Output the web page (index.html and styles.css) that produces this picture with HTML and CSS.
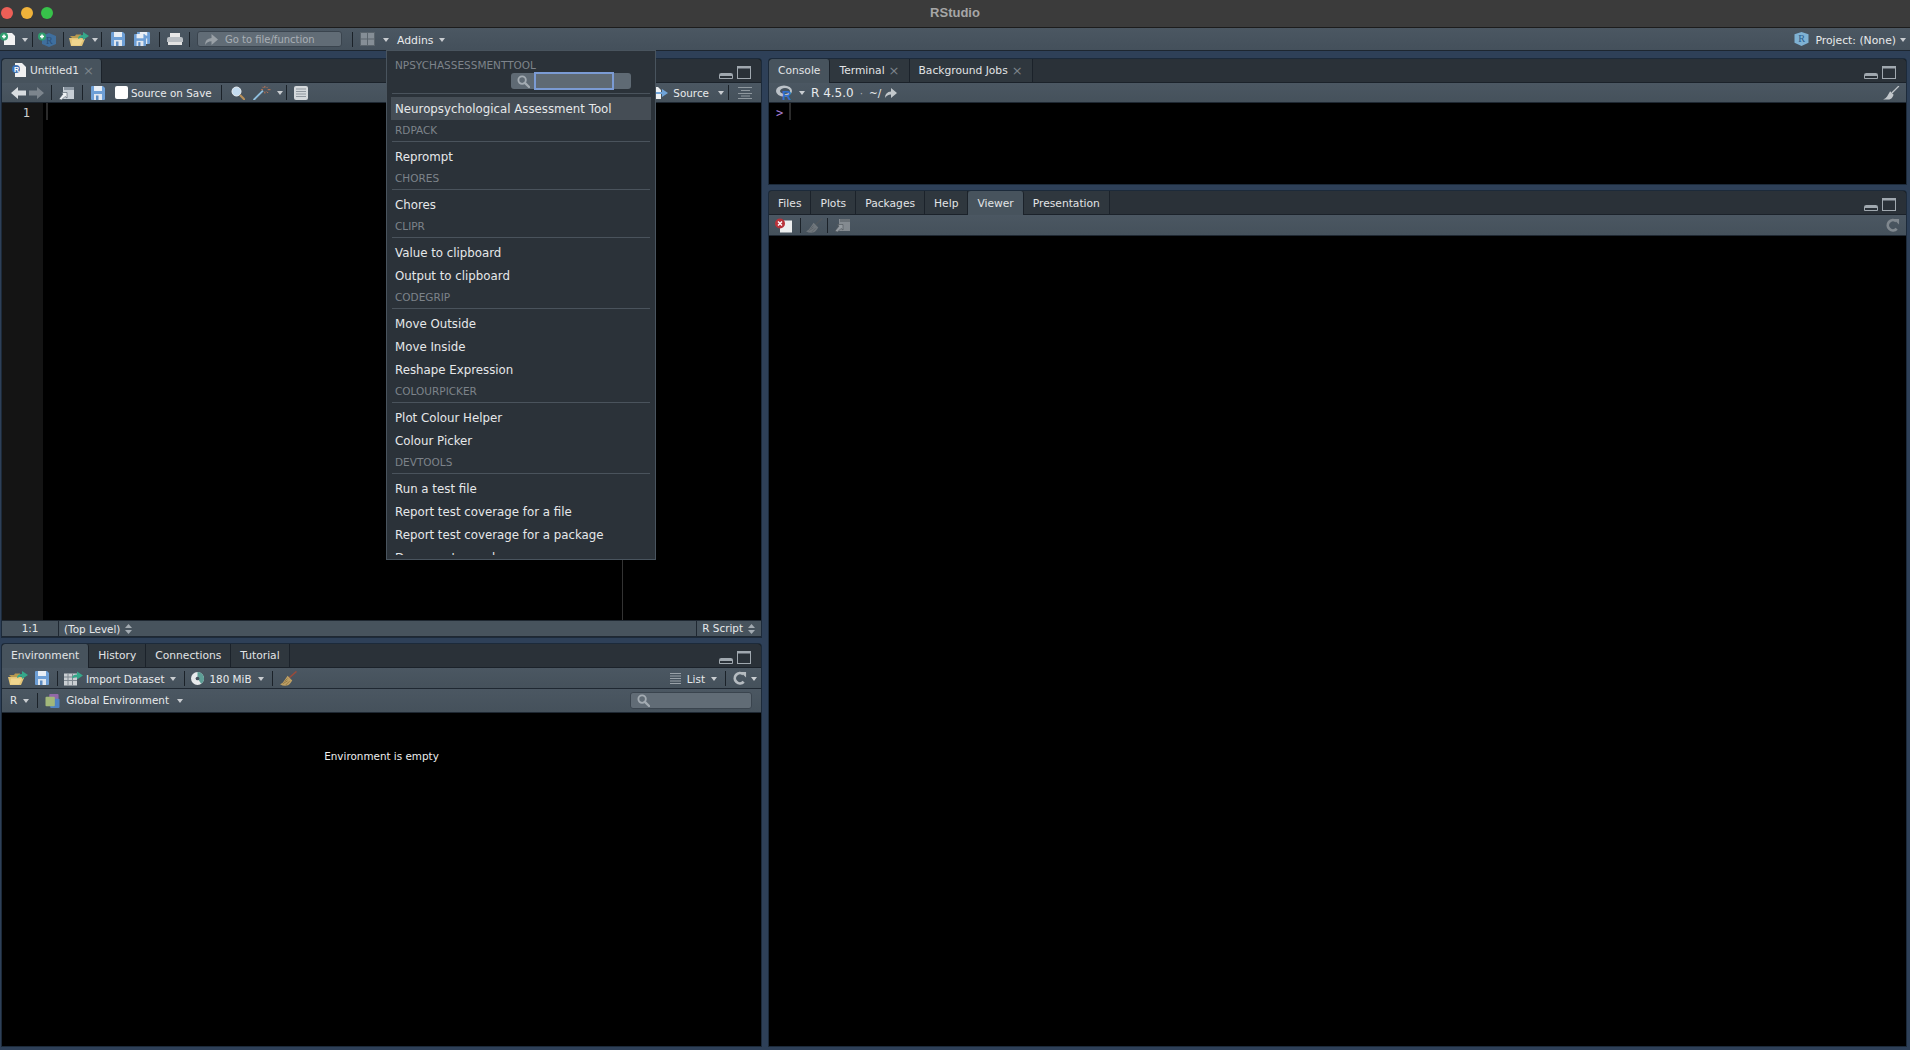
FILE: index.html
```html
<!DOCTYPE html>
<html lang="en">
<head>
    <meta charset="UTF-8">
    <title>RStudio</title>
    <link rel="stylesheet" href="styles.css">
</head>
<body>
    <svg class="sprites" xmlns="http://www.w3.org/2000/svg">
        <symbol id="i-save" viewBox="0 0 14 14">
            <path d="M0 1q0-1 1-1h11l2 2v11q0 1-1 1H1q-1 0-1-1z" fill="#6d9fd6"/>
            <rect x="3" y="0" width="8" height="5" fill="#e8eef5"/>
            <rect x="3" y="8" width="8" height="6" fill="#dfe7f0"/>
            <rect x="5" y="9.500" width="2.500" height="4.500" fill="#5d8cc2"/>
        </symbol>
        <symbol id="i-folder" viewBox="0 0 20 14">
            <path d="M1 4h5l1-1.500h5V6H3z" fill="#b89a50"/>
            <path d="M0 6h13l3 1-3 7H2z" fill="#e3c477"/>
            <path d="M3 7.500h11l-3 6H2z" fill="#f0d68f"/>
            <path d="M9 7q0-4 5-4V0l6 4-6 4V5.500q-3 0-5 1.500z" fill="#35a88a"/>
        </symbol>
        <symbol id="i-popout" viewBox="0 0 15 14">
            <path d="M4 1h11v12H4z" fill="#c7ced5"/>
            <path d="M5 1h10v3H5z" fill="#8b96a1"/>
            <path d="M0 13l4-5-2-1.500h6V12L6 10.500 2.500 14z" fill="#eef1f3" stroke="#47535e" stroke-width=".6"/>
        </symbol>
        <symbol id="i-broom" viewBox="0 0 18 16">
            <path d="M17.500 0.500L10 7" stroke="#9a4a3a" stroke-width="1.600" fill="none"/>
            <path d="M8 5l5 5q-3 5-6 5.500Q3 16 0 14q3-1 4-3 2-3 4-6z" fill="#bd9f63"/>
            <path d="M3 13.500l5-3M6 15l4-4M5 11l3-3" stroke="#7f673a" stroke-width=".7" fill="none"/>
        </symbol>
        <symbol id="i-search" viewBox="0 0 14 14">
            <circle cx="5.500" cy="5.500" r="4" fill="none" stroke="currentColor" stroke-width="2"/>
            <path d="M8.500 8.500L13 13" stroke="currentColor" stroke-width="2.400" stroke-linecap="round"/>
        </symbol>
        <symbol id="i-refresh" viewBox="0 0 15 15">
            <path d="M12 11.500A5.500 5.500 0 1 1 11.500 3.500" fill="none" stroke="currentColor" stroke-width="3"/>
            <path d="M8.500 1h6v6z" fill="currentColor"/>
        </symbol>
        <symbol id="i-updown" viewBox="0 0 7 10">
            <path d="M3.500 0L7 4H0zM0 6h7l-3.500 4z" fill="#a3abb2"/>
        </symbol>
        <symbol id="i-shrink" viewBox="0 0 14 6">
            <path d="M.5 1.500q0-1 1-1h11q1 0 1 1v4H.5z" fill="none" stroke="#a0a8af"/>
            <rect x="1" y="1" width="12" height="2" fill="#a0a8af"/>
        </symbol>
        <symbol id="i-expand" viewBox="0 0 14 13">
            <rect x=".5" y=".5" width="13" height="12" fill="none" stroke="#a0a8af"/>
            <rect x="1" y="1" width="12" height="1.500" fill="#a0a8af"/>
        </symbol>
        <symbol id="i-r-arrow" viewBox="0 0 12 10">
            <path d="M0 10q0-6 6-6.500V0l6 5-6 5V6.500Q2 6.500 0 10z" fill="currentColor"/>
        </symbol>
    </svg>

    <div class="titlebar">
        <div class="lights">
            <span class="light light-red"></span>
            <span class="light light-yellow"></span>
            <span class="light light-green"></span>
        </div>
        <span class="title-text">RStudio</span>
    </div>

    <div class="main-toolbar">
        <svg class="icon w16" viewBox="0 0 16 14">
            <path d="M4 1h8l3 3v9H4z" fill="#f2f2f2"/>
            <circle cx="4" cy="4.500" r="4" fill="#2f9e6e"/>
            <path d="M2 4.500h4M4 2.500v4" stroke="#fff" stroke-width="1.500"/>
        </svg>
        <span class="caret m-l6"></span>
        <span class="sep m-l4"></span>
        <svg class="icon w19 m-l5" viewBox="0 0 19 15">
            <path d="M11 1l7 3v8l-7 3-7-3V4z" fill="#3f6f9e"/>
            <text x="8" y="12" class="svg-r">R</text>
            <circle cx="4" cy="4.500" r="4" fill="#2f9e6e"/>
            <path d="M2 4.500h4M4 2.500v4" stroke="#fff" stroke-width="1.500"/>
        </svg>
        <span class="sep m-l6"></span>
        <svg class="icon w20 m-l5"><use href="#i-folder"/></svg>
        <span class="caret m-l3"></span>
        <span class="sep m-l3"></span>
        <svg class="icon w14 m-l9"><use href="#i-save"/></svg>
        <svg class="icon w16 m-l9" viewBox="0 0 16 14">
            <use href="#i-save" x="3" y="-1" width="13" height="13"/>
            <use href="#i-save" x="0" y="2" width="12" height="12"/>
        </svg>
        <span class="sep m-l9"></span>
        <svg class="icon w16 m-l7" viewBox="0 0 16 14">
            <path d="M3 1h10v5H3z" fill="#e8e8e8"/>
            <path d="M0 7q0-2 2-2h12q2 0 2 2v3H0z" fill="#b9bec3"/>
            <path d="M1 10h14v3H1z" fill="#e3e3e3"/>
        </svg>
        <span class="sep m-l6"></span>
        <div class="goto m-l7">
            <svg class="goto-arrow"><use href="#i-r-arrow"/></svg>
            <span class="goto-text">Go to file/function</span>
        </div>
        <span class="sep m-l10"></span>
        <svg class="icon w15 m-l7" viewBox="0 0 15 14">
            <rect width="15" height="14" fill="#5a646c"/>
            <path d="M1 1h6v5.500H1zM8 1h6v5.500H8zM1 7.500h6V13H1zM8 7.500h6V13H8z" fill="#858e96"/>
        </svg>
        <span class="caret m-l8"></span>
        <span class="main-text m-l8">Addins</span>
        <span class="caret m-l6"></span>
        <span class="spacer"></span>
        <svg class="icon w15" viewBox="0 0 15 15">
            <path d="M7.500 0L15 2.500v9L7.500 15 0 11.500v-9z" fill="#7fb2d4"/>
            <text x="4" y="11" class="svg-r-dark">R</text>
        </svg>
        <span class="main-text m-l6">Project: (None)</span>
        <span class="caret m-l4"></span>
        <span class="main-end"></span>
    </div>

    <div class="workspace">
        <div class="column left-column">
            <section class="pane source-pane">
                <div class="tabstrip">
                    <div class="tab active tab-source">
                        <svg class="icon w14" viewBox="0 0 14 14">
                            <path d="M3 0h7l4 4v10H3z" fill="#f1f1f1"/>
                            <circle cx="4" cy="6" r="4" fill="#3c6fb4"/>
                            <text x="2" y="9" class="svg-r-small">R</text>
                        </svg>
                        <span>Untitled1</span>
                        <span class="tab-x">×</span>
                    </div>
                    <span class="spacer"></span>
                    <svg class="shrink"><use href="#i-shrink"/></svg>
                    <svg class="expand"><use href="#i-expand"/></svg>
                </div>
                <div class="tb tb-short">
                    <svg class="icon w15 m-l9" viewBox="0 0 15 12"><path d="M0 6l7-6v3.500h8v5H7V12z" fill="#d8dcdf"/></svg>
                    <svg class="icon w15 m-l3" viewBox="0 0 15 12"><path d="M15 6L8 0v3.500H0v5h8V12z" fill="#7c858d"/></svg>
                    <span class="sep m-l7"></span>
                    <svg class="icon w15 m-l7"><use href="#i-popout"/></svg>
                    <span class="sep m-l8"></span>
                    <svg class="icon w14 m-l8"><use href="#i-save"/></svg>
                    <span class="checkbox m-l10"></span>
                    <span class="tb-text m-l3">Source on Save</span>
                    <span class="sep m-l9"></span>
                    <svg class="icon w14 m-l9" viewBox="0 0 14 14">
                        <circle cx="5.500" cy="5.500" r="4.500" fill="#c4dcf0" stroke="#e8eef3"/>
                        <path d="M9 9l5 5" stroke="#b8905a" stroke-width="2.200"/>
                    </svg>
                    <svg class="icon w19 m-l8" viewBox="0 0 19 16">
                        <path d="M0 16L10 6" stroke="#8fc0e0" stroke-width="2"/>
                        <path d="M12 1v2M12 7v2M15 5h3M8 5h2M9.500 2l1 1M14 7l1.500 1.500M15 2l-1 1" stroke="#d07a50" stroke-width="1"/>
                    </svg>
                    <span class="caret m-l5"></span>
                    <span class="sep m-l3"></span>
                    <svg class="icon w14 m-l7" viewBox="0 0 14 14">
                        <rect width="14" height="14" rx="2" fill="#d5d9dc"/>
                        <path d="M2 3h10M2 5.500h10M2 8h10M2 10.500h10" stroke="#8f979e"/>
                    </svg>
                    <span class="spacer"></span>
                    <svg class="icon w18" viewBox="0 0 18 14">
                        <path d="M0 1h8l3 3v9H0z" fill="#eef0f2"/>
                        <path d="M6 6h6V3l6 4-6 4V8H6z" fill="#6fa3d8"/>
                    </svg>
                    <span class="tb-text m-l5">Source</span>
                    <span class="caret m-l9"></span>
                    <span class="sep m-l4"></span>
                    <svg class="icon w14 m-l9" viewBox="0 0 14 12">
                        <path d="M0 .5h14M3 3.500h9M0 6.500h14M3 9h9M0 11.500h14" stroke="#8f989f"/>
                    </svg>
                    <span class="tb-end"></span>
                </div>
                <div class="editor">
                    <div class="gutter">1</div>
                    <div class="code"><span class="cursor"></span></div>
                </div>
                <div class="statusbar">
                    <span class="pos">1:1</span>
                    <span class="scope">(Top Level)</span>
                    <svg class="updown"><use href="#i-updown"/></svg>
                    <span class="spacer"></span>
                    <span class="filetype">R Script</span>
                    <svg class="updown"><use href="#i-updown"/></svg>
                </div>
            </section>

            <section class="pane env-pane">
                <div class="tabstrip">
                    <div class="tab active">Environment</div>
                    <div class="tab">History</div>
                    <div class="tab">Connections</div>
                    <div class="tab">Tutorial</div>
                    <span class="spacer"></span>
                    <svg class="shrink"><use href="#i-shrink"/></svg>
                    <svg class="expand"><use href="#i-expand"/></svg>
                </div>
                <div class="tb">
                    <svg class="icon w20 m-l6"><use href="#i-folder"/></svg>
                    <svg class="icon w14 m-l7"><use href="#i-save"/></svg>
                    <span class="sep m-l8"></span>
                    <svg class="icon w19 m-l6" viewBox="0 0 19 14">
                        <rect y="2" width="13" height="12" fill="#c9ced2"/>
                        <path d="M0 5.500h13M0 9h13M4 2v12M8.500 2v12" stroke="#7d868e"/>
                        <path d="M8 7q0-4 5-4V0l6 4-6 4V5.500q-3 0-5 1.500z" fill="#35a88a"/>
                    </svg>
                    <span class="tb-text m-l3">Import Dataset</span>
                    <span class="caret m-l6"></span>
                    <span class="sep m-l8"></span>
                    <svg class="icon w13 m-l6" viewBox="0 0 14 14">
                        <circle cx="7" cy="7" r="7" fill="#e8eaec"/>
                        <path d="M7 7V0a7 7 0 0 1 4 12.700z" fill="#5e9e96"/>
                        <circle cx="7" cy="7" r="2" fill="#47535e"/>
                    </svg>
                    <span class="tb-text m-l5">180 MiB</span>
                    <span class="caret m-l6"></span>
                    <span class="sep m-l8"></span>
                    <svg class="icon w17 m-l7"><use href="#i-broom"/></svg>
                    <span class="spacer"></span>
                    <svg class="icon w11" viewBox="0 0 11 11">
                        <path d="M0 .5h11M0 3h11M0 5.500h11M0 8h11M0 10.500h11" stroke="#99a1a8"/>
                    </svg>
                    <span class="tb-text m-l6">List</span>
                    <span class="caret m-l6"></span>
                    <span class="sep m-l8"></span>
                    <svg class="icon w15 m-l6 refresh"><use href="#i-refresh"/></svg>
                    <span class="caret m-l4"></span>
                    <span class="tb-end-xs"></span>
                </div>
                <div class="tb tb-tall">
                    <span class="tb-text m-l8">R</span>
                    <span class="caret m-l6"></span>
                    <span class="sep m-l8"></span>
                    <svg class="icon w15 m-l7" viewBox="0 0 15 15">
                        <rect x="4" y="0" width="10" height="10" rx="1" fill="#9268a8"/>
                        <rect x="5" y="5" width="10" height="10" rx="1" fill="#4f83c4"/>
                        <rect x="0" y="3" width="10" height="10" rx="1" fill="#a3b87a"/>
                    </svg>
                    <span class="tb-text m-l6">Global Environment</span>
                    <span class="caret m-l8"></span>
                    <span class="spacer"></span>
                    <div class="search-box">
                        <svg class="search-icon"><use href="#i-search"/></svg>
                    </div>
                </div>
                <div class="env-content">Environment is empty</div>
            </section>
        </div>

        <div class="column right-column">
            <section class="pane console-pane">
                <div class="tabstrip">
                    <div class="tab active">Console</div>
                    <div class="tab">Terminal <span class="tab-x">×</span></div>
                    <div class="tab">Background Jobs <span class="tab-x">×</span></div>
                    <span class="spacer"></span>
                    <svg class="shrink"><use href="#i-shrink"/></svg>
                    <svg class="expand"><use href="#i-expand"/></svg>
                </div>
                <div class="tb tb-short">
                    <svg class="icon w19 m-l7" viewBox="0 0 19 15">
                        <ellipse cx="8" cy="6" rx="8" ry="5.500" fill="#bcc2c8"/>
                        <ellipse cx="9" cy="6" rx="5" ry="3" fill="#47535e"/>
                        <text x="6" y="15" class="svg-r-blue">R</text>
                    </svg>
                    <span class="caret m-l4"></span>
                    <span class="tb-text console-ver m-l6">R 4.5.0</span>
                    <span class="tb-text dot">·</span>
                    <span class="tb-text">~/</span>
                    <svg class="console-go"><use href="#i-r-arrow"/></svg>
                    <span class="spacer"></span>
                    <svg class="icon w18 console-broom" viewBox="0 0 18 16">
                        <path d="M18 0L10 8" stroke="#c2c7cb" stroke-width="1.400"/>
                        <path d="M8 6l4 4q-2 5-5 5.500H0q3-1 4.500-3.500z" fill="#c2c7cb"/>
                    </svg>
                    <span class="tb-end-sm"></span>
                </div>
                <div class="console">
                    <span class="prompt">&gt;</span><span class="cursor"></span>
                </div>
            </section>

            <section class="pane viewer-pane">
                <div class="tabstrip">
                    <div class="tab">Files</div>
                    <div class="tab">Plots</div>
                    <div class="tab">Packages</div>
                    <div class="tab">Help</div>
                    <div class="tab active">Viewer</div>
                    <div class="tab">Presentation</div>
                    <span class="spacer"></span>
                    <svg class="shrink"><use href="#i-shrink"/></svg>
                    <svg class="expand"><use href="#i-expand"/></svg>
                </div>
                <div class="tb">
                    <svg class="icon w17 m-l6" viewBox="0 0 17 14">
                        <rect x="5" y="2" width="12" height="12" fill="#eceeef"/>
                        <circle cx="5" cy="5" r="5" fill="#b8333b"/>
                        <path d="M3 3l4 4M7 3L3 7" stroke="#fff" stroke-width="1.400"/>
                    </svg>
                    <span class="sep m-l8"></span>
                    <svg class="icon w17 m-l5 dim"><use href="#i-broom"/></svg>
                    <span class="sep m-l4"></span>
                    <svg class="icon w15 m-l7 dim"><use href="#i-popout"/></svg>
                    <span class="spacer"></span>
                    <svg class="icon w15 refresh-dim"><use href="#i-refresh"/></svg>
                    <span class="tb-end-sm"></span>
                </div>
                <div class="viewer-content"></div>
            </section>
        </div>
    </div>

    <div class="addins-menu">
        <div class="menu-scroll">
            <div class="menu-head">NPSYCHASSESSMENTTOOL</div>
            <div class="menu-search">
                <div class="menu-search-box">
                    <svg class="menu-search-icon"><use href="#i-search"/></svg>
                    <span class="menu-search-input"></span>
                </div>
            </div>
            <div class="menu-item selected">Neuropsychological Assessment Tool</div>
            <div class="menu-group">RDPACK</div>
            <div class="menu-item">Reprompt</div>
            <div class="menu-group">CHORES</div>
            <div class="menu-item">Chores</div>
            <div class="menu-group">CLIPR</div>
            <div class="menu-item">Value to clipboard</div>
            <div class="menu-item">Output to clipboard</div>
            <div class="menu-group">CODEGRIP</div>
            <div class="menu-item">Move Outside</div>
            <div class="menu-item">Move Inside</div>
            <div class="menu-item">Reshape Expression</div>
            <div class="menu-group">COLOURPICKER</div>
            <div class="menu-item">Plot Colour Helper</div>
            <div class="menu-item">Colour Picker</div>
            <div class="menu-group">DEVTOOLS</div>
            <div class="menu-item">Run a test file</div>
            <div class="menu-item">Report test coverage for a file</div>
            <div class="menu-item">Report test coverage for a package</div>
            <div class="menu-item">Document a package</div>
        </div>
    </div>
</body>
</html>
```

FILE: styles.css
```css
/* RStudio window */
html, body {
  margin: 0;
  height: 100%;
}

body {
  width: 1910px;
  height: 1050px;
  overflow: hidden;
  display: flex;
  flex-direction: column;
  position: relative;
  background-color: #2e4058;
  font-family: "DejaVu Sans", "Liberation Sans", sans-serif;
  font-size: 10.7px;
  color: #e6e8ea;
}

.sprites {
  display: none;
}

.spacer {
  flex: 1;
}

/* title bar */
.titlebar {
  height: 27px;
  flex: none;
  background-color: #3b3b3b;
  border-bottom: 1px solid #1c1c1c;
  display: flex;
  align-items: center;
  justify-content: center;
  position: relative;
}

.lights {
  position: absolute;
  left: 1px;
  top: 7px;
  display: flex;
  gap: 8px;
}

.light {
  width: 12px;
  height: 12px;
  border-radius: 50%;
}

.light-red { background-color: #ed5f57; }
.light-yellow { background-color: #f0b33a; }
.light-green { background-color: #37c24a; }

.title-text {
  font-family: "Liberation Sans", sans-serif;
  font-size: 13px;
  font-weight: bold;
  color: #a6a6a6;
  margin-top: -3px;
}

/* toolbars */
.main-toolbar {
  height: 22px;
  flex: none;
  display: flex;
  align-items: center;
  background: linear-gradient(#4b5762, #44505b);
  border-bottom: 1px solid #1d2630;
}

.main-text {
  white-space: nowrap;
  font-size: 10.8px;
  color: #e8eaec;
  margin-top: 2px;
}

.main-end { width: 4px; }

.tb {
  height: 21px;
  flex: none;
  display: flex;
  align-items: center;
  background: linear-gradient(#4b5762, #45515b);
  border-bottom: 1px solid #1f2832;
  box-sizing: border-box;
}

.tb-short {
  height: 20px;
}

.tb-tall {
  height: 24px;
}

.tb-text {
  white-space: nowrap;
  font-size: 10.4px;
  color: #e8eaec;
}

.env-pane .tb-text {
  padding-top: 2px;
}

.env-pane .tb-tall .tb-text {
  padding-top: 0;
  padding-bottom: 2px;
}

.tb-end { width: 9px; }
.tb-end-sm { width: 6px; }
.tb-end-xs { width: 4px; }

.icon {
  display: block;
  flex: none;
  height: 15px;
}

.w11 { width: 11px; height: 11px; }
.w13 { width: 13px; height: 13px; }
.w14 { width: 14px; height: 14px; }
.w15 { width: 15px; height: 14px; }
.w16 { width: 16px; height: 14px; }
.w17 { width: 17px; height: 15px; }
.w18 { width: 18px; height: 14px; }
.w19 { width: 19px; height: 15px; }
.w20 { width: 20px; height: 14px; }

.m-l3 { margin-left: 3px; }
.m-l4 { margin-left: 4px; }
.m-l5 { margin-left: 5px; }
.m-l6 { margin-left: 6px; }
.m-l7 { margin-left: 7px; }
.m-l8 { margin-left: 8px; }
.m-l9 { margin-left: 9px; }
.m-l10 { margin-left: 10px; }

.sep {
  width: 1px;
  height: 15px;
  flex: none;
  background-color: #1b2229;
}

.caret {
  width: 0;
  height: 0;
  flex: none;
  border-left: 3.5px solid transparent;
  border-right: 3.5px solid transparent;
  border-top: 4px solid #c9cdd1;
  margin-top: 1px;
}

.dim {
  opacity: 0.45;
  filter: grayscale(1);
}

.svg-r {
  font-family: "Liberation Serif", serif;
  font-size: 10px;
  fill: #2a4f78;
}

.svg-r-dark {
  font-family: "Liberation Serif", serif;
  font-size: 11px;
  fill: #2c5d8c;
}

.svg-r-small {
  font-family: "Liberation Sans", sans-serif;
  font-size: 7px;
  font-weight: bold;
  fill: #fff;
}

.svg-r-blue {
  font-family: "Liberation Sans", sans-serif;
  font-size: 13px;
  font-weight: bold;
  fill: #2f6fd0;
}

.goto {
  width: 145px;
  height: 16px;
  flex: none;
  box-sizing: border-box;
  display: flex;
  align-items: center;
  background-color: #616c76;
  border: 1px solid #3a444e;
  border-radius: 3px;
  color: #a9afb5;
  font-size: 10px;
}

.goto-text {
  padding-top: 1px;
}

.goto-arrow {
  width: 13px;
  height: 11px;
  margin-left: 7px;
  margin-right: 7px;
  color: #99a0a6;
}

.refresh { color: #b5bbc0; }
.refresh-dim { color: #80888f; }

/* panes */
.workspace {
  flex: 1;
  display: flex;
  gap: 8px;
  padding: 8px 4px 4px 2px;
  min-height: 0;
}

.column {
  display: flex;
  flex-direction: column;
}

.left-column {
  width: 759px;
  gap: 7px;
}

.right-column {
  width: 1137px;
  gap: 7px;
}

.pane {
  display: flex;
  flex-direction: column;
  min-height: 0;
  background-color: #000;
  border-radius: 3px 3px 0 0;
  overflow: hidden;
  box-shadow: 0 0 0 1px #1c2a3a;
}

.source-pane { height: 578px; flex: none; }
.env-pane { flex: 1; }
.console-pane { height: 125px; flex: none; }
.viewer-pane { flex: 1; }

.tabstrip {
  height: 23px;
  flex: none;
  display: flex;
  align-items: stretch;
  background-color: #2a3138;
  border-bottom: 1px solid #1b222a;
}

.tab {
  display: flex;
  align-items: center;
  gap: 4px;
  padding: 0 9px;
  background-color: #2f373e;
  border-right: 1px solid #1b222a;
  color: #e2e4e6;
  white-space: nowrap;
}

.tab.active {
  background-color: #47535d;
  margin-bottom: -1px;
  padding-bottom: 1px;
  border-radius: 3px 3px 0 0;
}

.source-pane .tab,
.console-pane .tab {
  padding-bottom: 1px;
}

.source-pane .tab.active,
.console-pane .tab.active {
  padding-bottom: 2px;
}

.tab-source {
  padding-left: 10px;
  padding-right: 7px;
}

.viewer-pane .tab {
  padding-top: 1px;
}

.tab-x {
  color: #7b838a;
  font-size: 13px;
  line-height: 1;
}

.shrink {
  width: 14px;
  height: 6px;
  margin: 14px 4px 0 0;
}

.expand {
  width: 14px;
  height: 13px;
  margin: 7px 10px 0 0;
}

/* editor */
.editor {
  flex: 1;
  display: flex;
  background-color: #000;
  min-height: 0;
}

.gutter {
  width: 41px;
  flex: none;
  box-sizing: border-box;
  background-color: #141414;
  color: #d0d0d0;
  text-align: right;
  padding: 2px 13px 0 0;
  font-family: "DejaVu Sans Mono", monospace;
  font-size: 12px;
  line-height: 16px;
}

.code {
  flex: 1;
  padding-left: 3px;
  position: relative;
}

.code::after {
  content: "";
  position: absolute;
  left: 579px;
  top: 0;
  bottom: 0;
  width: 1px;
  background-color: #333;
}

.cursor {
  display: inline-block;
  width: 2px;
  height: 17px;
  background-color: #2b2b2b;
}

.checkbox {
  width: 13px;
  height: 13px;
  flex: none;
  background-color: #fff;
  border-radius: 2px;
}

.statusbar {
  height: 17px;
  flex: none;
  display: flex;
  align-items: center;
  background-color: #47535d;
  border-top: 1px solid #1f2832;
  border-bottom: 1px solid #1f2832;
  box-sizing: border-box;
  font-size: 10.4px;
}

.pos {
  width: 56px;
  text-align: center;
  border-right: 1px solid #1f2832;
  line-height: 15px;
}

.scope {
  margin-left: 5px;
  margin-right: 5px;
}

.filetype {
  border-left: 1px solid #1f2832;
  line-height: 15px;
  padding-left: 5px;
  margin-right: 5px;
}

.updown {
  width: 7px;
  height: 10px;
  margin-right: 6px;
}

.search-box {
  width: 122px;
  height: 17px;
  flex: none;
  box-sizing: border-box;
  margin-right: 9px;
  display: flex;
  align-items: center;
  background-color: #616c76;
  border: 1px solid #3a444e;
  border-radius: 3px;
}

.search-icon {
  width: 13px;
  height: 13px;
  margin-left: 6px;
  color: #a3abb2;
}

.env-content {
  flex: 1;
  text-align: center;
  padding-top: 37px;
  color: #eee;
  font-size: 10.4px;
}

/* console */
.console {
  flex: 1;
  display: flex;
  align-items: flex-start;
  padding-left: 7px;
}

.prompt {
  width: 13px;
  margin-top: 2px;
  color: #a67fd6;
  font-family: "DejaVu Sans Mono", monospace;
  font-size: 12px;
  line-height: 16px;
}

.console-ver { font-size: 12px; }

.dot {
  margin: 0 6px;
  color: #aab0b5;
}

.console-go {
  width: 12px;
  height: 10px;
  margin-left: 4px;
  color: #c2c7cb;
}

.viewer-content {
  flex: 1;
}

/* addins popup */
.addins-menu {
  position: absolute;
  left: 386px;
  top: 50px;
  width: 270px;
  height: 510px;
  box-sizing: border-box;
  display: flex;
  flex-direction: column;
  background-color: #2b3239;
  border: 1px solid #49545e;
  padding: 0 4px 4px;
  font-size: 11.8px;
}

.menu-scroll {
  flex: 1;
  min-height: 0;
  overflow: hidden;
}

.menu-head {
  height: 20px;
  line-height: 29px;
  padding-left: 4px;
  font-size: 10.5px;
  color: #7d838a;
}

.menu-search {
  height: 20px;
  padding: 2px 19px 0 0;
  margin: 0 1px 3px 1px;
  display: flex;
  justify-content: flex-end;
  align-items: flex-start;
  border-bottom: 1px solid #4a535c;
}

.menu-search-box {
  width: 120px;
  height: 16px;
  display: flex;
  background-color: #5f6a74;
  border-radius: 3px;
}

.menu-search-icon {
  width: 13px;
  height: 13px;
  flex: none;
  margin: 2px 4px 0 6px;
  color: #a3abb2;
}

.menu-search-input {
  width: 80px;
  height: 18px;
  margin-top: -1px;
  box-sizing: border-box;
  background-color: #5f6a74;
  border: 2px solid #7b9bd4;
}

.menu-item {
  height: 23px;
  line-height: 25px;
  padding-left: 4px;
  color: #e6e8ea;
  white-space: nowrap;
}

.menu-item.selected {
  background-color: #454d55;
}

.menu-group {
  height: 21px;
  margin: 0 1px 3px 1px;
  line-height: 21px;
  padding-left: 3px;
  border-bottom: 1px solid #4a535c;
  font-size: 10.5px;
  color: #7d838a;
}
```
